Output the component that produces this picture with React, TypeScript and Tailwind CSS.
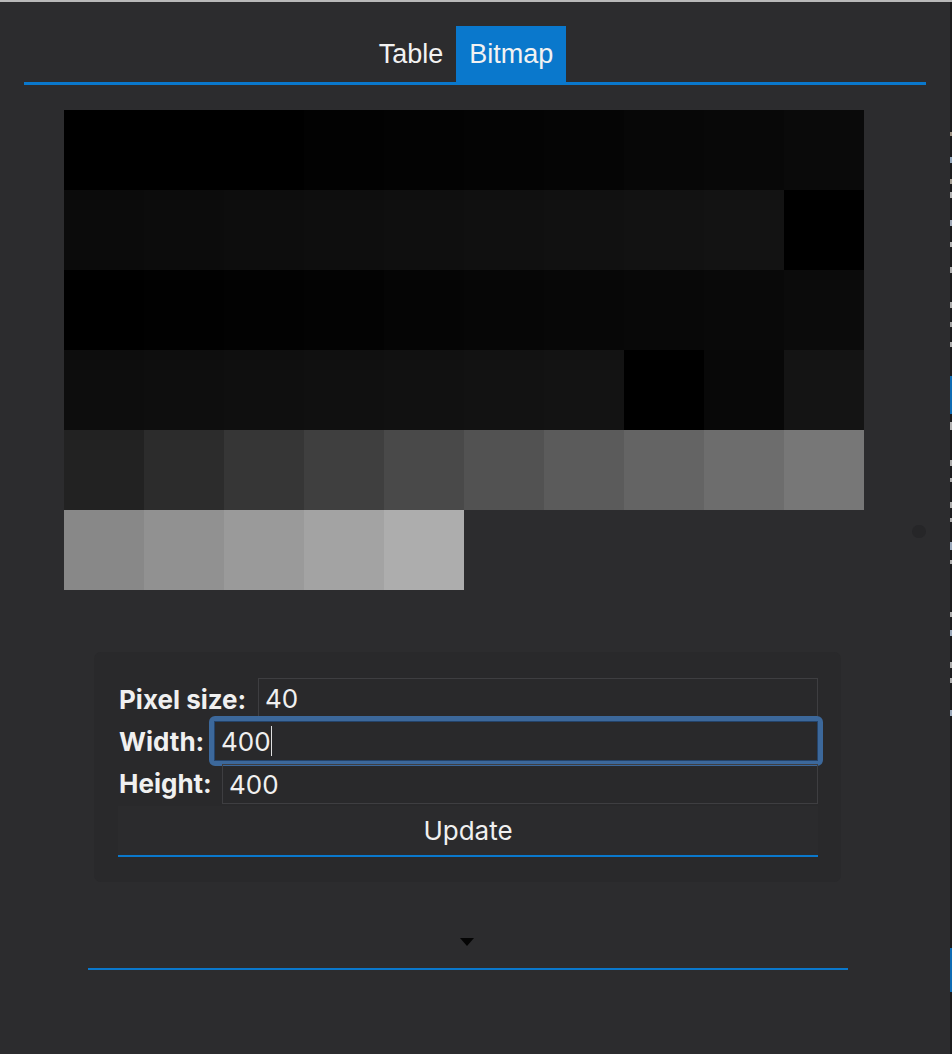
import React from "react";

const rows: number[][] = [
  [0x00, 0x00, 0x00, 0x02, 0x03, 0x04, 0x05, 0x07, 0x08, 0x0a],
  [0x0b, 0x0c, 0x0d, 0x0e, 0x0f, 0x10, 0x11, 0x12, 0x13, 0x00],
  [0x00, 0x01, 0x02, 0x03, 0x05, 0x06, 0x07, 0x08, 0x09, 0x0b],
  [0x0d, 0x0e, 0x0f, 0x10, 0x11, 0x12, 0x13, 0x00, 0x08, 0x14],
  [0x22, 0x2c, 0x36, 0x3f, 0x49, 0x52, 0x5b, 0x64, 0x6d, 0x77],
  [0x88, 0x91, 0x9a, 0xa3, 0xad],
];

function gray(v: number) {
  const h = v.toString(16).padStart(2, "0");
  return `#${h}${h}${h}`;
}

const edgeBits: { top: number; h: number; c: string }[] = [
  { top: 130, h: 4, c: "#9a8f80" },
  { top: 155, h: 6, c: "#8fa3b8" },
  { top: 177, h: 5, c: "#a09a90" },
  { top: 190, h: 6, c: "#b0b0b0" },
  { top: 218, h: 6, c: "#9fa9b8" },
  { top: 240, h: 5, c: "#b0b0b0" },
  { top: 265, h: 6, c: "#aaaaaa" },
  { top: 300, h: 6, c: "#aaaaaa" },
  { top: 320, h: 5, c: "#a0a0a0" },
  { top: 340, h: 5, c: "#aaaaaa" },
  { top: 374, h: 38, c: "#0f6cb4" },
  { top: 420, h: 8, c: "#b0b0b0" },
  { top: 458, h: 6, c: "#aaaaaa" },
  { top: 476, h: 4, c: "#aaaaaa" },
  { top: 500, h: 6, c: "#aaaaaa" },
  { top: 516, h: 4, c: "#aaaaaa" },
  { top: 540, h: 8, c: "#9aa8ba" },
  { top: 558, h: 4, c: "#aaaaaa" },
  { top: 610, h: 5, c: "#aaaaaa" },
  { top: 628, h: 6, c: "#9aa8ba" },
  { top: 660, h: 6, c: "#aaaaaa" },
  { top: 676, h: 5, c: "#aaaaaa" },
  { top: 708, h: 6, c: "#9aa8ba" },
  { top: 946, h: 44, c: "#0f6cb4" },
];

export default function App() {
  return (
    <div
      className="relative w-[952px] h-[1054px] bg-[#2c2c2e] overflow-hidden border-t-2 border-[#b9b9b9] flex"
      style={{ fontFamily: "Inter, 'Noto Sans', sans-serif" }}
    >
      <div className="w-[950px] flex flex-col">
        {/* Tabs */}
        <div className="mx-[24px] mt-[24px] flex justify-center pr-[18px] border-b-[3px] border-[#0a78cc]">
          <div
            className="h-[56px] px-[13px] flex items-center text-[27px] text-[#f2f2f2]"
            style={{ fontFamily: "'Liberation Sans', Arial, sans-serif" }}
          >
            Table
          </div>
          <div
            className="h-[56px] px-[13px] flex items-center bg-[#0a78cc] text-[27px] text-[#f2f2f2]"
            style={{ fontFamily: "'Liberation Sans', Arial, sans-serif" }}
          >
            Bitmap
          </div>
        </div>

        {/* Bitmap */}
        <div className="ml-[64px] mt-[25px] w-[800px] flex flex-col">
          {rows.map((r, i) => (
            <div key={i} className="flex h-[80px]">
              {r.map((v, j) => (
                <div key={j} className="w-[80px] h-[80px]" style={{ backgroundColor: gray(v) }} />
              ))}
            </div>
          ))}
        </div>

        {/* Form panel */}
        <div className="ml-[94px] mt-[62px] w-[747px] rounded-[7px] bg-[#29292b] pt-[26px] pb-[25px] pl-[24px] pr-[23px] flex flex-col text-[26px] text-[#f0f0f0]">
          <div className="flex items-center h-[42px]">
            <span className="font-bold pl-[1px] w-[140px]">Pixel size:</span>
            <div className="flex-1 h-[40px] self-start border border-[#3e3e41] flex items-center pl-[6px]">40</div>
          </div>
          <div className="flex items-center h-[42px]">
            <span className="font-bold pl-[1px] w-[91px]">Width:</span>
            <div className="flex-1 -mr-[5px] h-[50px] rounded-[6px] border-[5px] border-[#3c689b] flex items-center">
              <div className="w-full h-[40px] border border-[#24436a] flex items-center pl-[6px]">
                <span>400</span>
                <span className="w-[1px] h-[30px] bg-[#e0e0e0]" />
              </div>
            </div>
          </div>
          <div className="flex items-center h-[42px]">
            <span className="font-bold pl-[1px] w-[104px]">Height:</span>
            <div className="flex-1 h-[40px] self-end border border-[#3e3e41] flex items-center pl-[6px]">400</div>
          </div>
          <div className="h-[51px] mt-[2px] bg-[#2b2b2d] border-b-2 border-[#0a78cc] flex items-center justify-center">
            Update
          </div>
        </div>

        {/* Arrow */}
        <div className="mt-[56px] flex justify-center pr-[16px]">
          <svg width="14" height="8" viewBox="0 0 14 8">
            <path d="M0 0 H14 L7 8 Z" fill="#050505" />
          </svg>
        </div>
        <div className="ml-[88px] mt-[22px] w-[760px] h-[2px] bg-[#0a78cc]" />
      </div>

      {/* cut-off neighbouring panel edge */}
      <div className="relative w-[2px] h-full bg-[#1c1c1e]">
        {edgeBits.map((b, i) => (
          <div
            key={i}
            className="absolute left-0 w-[2px]"
            style={{ top: b.top, height: b.h, backgroundColor: b.c }}
          />
        ))}
      </div>

      {/* scroll knob */}
      <div className="absolute left-[912px] top-[523px] w-[14px] h-[13px] rounded-full bg-[#262628]" />
    </div>
  );
}
